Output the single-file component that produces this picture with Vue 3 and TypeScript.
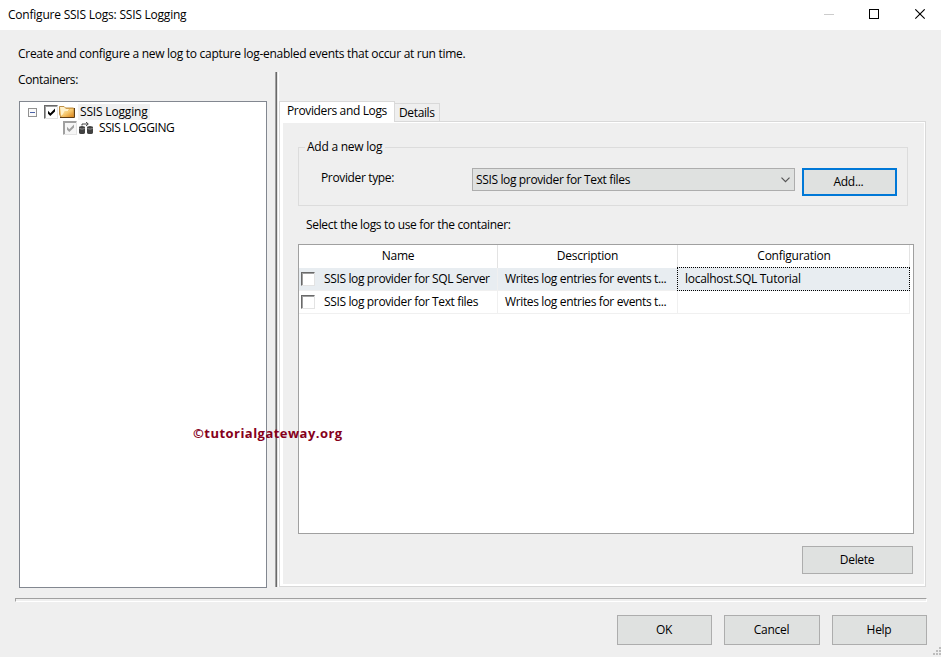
<script setup lang="ts">
import { ref } from 'vue'

interface LogRow {
  name: string
  description: string
  configuration: string
  checked: boolean
  selected: boolean
}

const providerType = 'SSIS log provider for Text files'
const activeTab = ref(0)
const tabs = ['Providers and Logs', 'Details']
const rows = ref<LogRow[]>([
  {
    name: 'SSIS log provider for SQL Server',
    description: 'Writes log entries for events t...',
    configuration: 'localhost.SQL Tutorial',
    checked: false,
    selected: true,
  },
  {
    name: 'SSIS log provider for Text files',
    description: 'Writes log entries for events t...',
    configuration: '',
    checked: false,
    selected: false,
  },
])
</script>

<template>
  <div class="window">
    <header class="titlebar">
      <span class="title">Configure SSIS Logs: SSIS Logging</span>
      <svg class="caption" width="102" height="11" viewBox="0 0 102 11" fill="none" shape-rendering="crispEdges">
        <path d="M0 5.5H10" stroke="#ccc" />
        <rect x="45.5" y="0.5" width="9" height="9" stroke="#000" />
        <path d="M91.3 0.3L100.7 9.7M100.7 0.3L91.3 9.7" stroke="#000" stroke-width="1.1" shape-rendering="auto" />
      </svg>
    </header>

    <p class="intro">Create and configure a new log to capture log-enabled events that occur at run time.</p>

    <main class="main">
      <section class="containers">
        <span class="containers-label">Containers:</span>
        <div class="tree">
          <div class="node root">
            <svg class="expander" width="9" height="9" viewBox="0 0 9 9" shape-rendering="crispEdges">
              <rect x="0.5" y="0.5" width="8" height="8" fill="#fafafa" stroke="#919191" />
              <path d="M2 4.5H7" stroke="#4b63a7" />
            </svg>
            <span class="check"><svg width="9" height="9" viewBox="0 0 9 9"><path d="M1 2.8L3.3 5.3L8 0.6V3.4L3.3 8L1 5.7Z" fill="#000" /></svg></span>
            <svg class="folder" width="16" height="14" viewBox="0 0 16 14">
              <defs>
                <linearGradient id="folderFill" x1="0" y1="0" x2="1" y2="1">
                  <stop offset="0" stop-color="#fff0bd" />
                  <stop offset="0.5" stop-color="#f5c66b" />
                  <stop offset="1" stop-color="#d98218" />
                </linearGradient>
              </defs>
              <path d="M0.5 1.5H5L6.5 3H14.5V12.5H2L0.5 9Z" fill="#e6ac4e" stroke="#bd8f45" />
              <path d="M1 2H5L7 4H10L9 6L2 11Z" fill="#fff1ca" />
              <path d="M2.5 12L5.5 6H9L11 4H14.5V12Z" fill="url(#folderFill)" />
              <path d="M1 12.5H15.5V3" fill="none" stroke="#5e3c13" />
            </svg>
            <span class="node-text active">SSIS Logging</span>
          </div>
          <div class="node child">
            <span class="check muted"><svg width="9" height="9" viewBox="0 0 9 9"><path d="M1 2.8L3.3 5.3L8 0.6V3.4L3.3 8L1 5.7Z" fill="#a0a0a0" /></svg></span>
            <svg class="package" width="15" height="13" viewBox="0 0 15 13">
              <path d="M0 5.5Q0 4 3 4T6 5.5V10.5Q6 12 3 12T0 10.5Z" fill="#414141" />
              <path d="M8 5.5Q8 4 11 4T14 5.5V10.5Q14 12 11 12T8 10.5Z" fill="#414141" />
              <path d="M0.5 6.5Q3 7.8 5.7 6.5M8.5 6.5Q11 7.8 13.7 6.5" fill="none" stroke="#aaa" stroke-width="0.8" />
              <path d="M3 3.5V2H9M7 0L9.3 2L7 4" fill="none" stroke="#444" />
            </svg>
            <span class="node-text">SSIS LOGGING</span>
          </div>
        </div>
      </section>

      <div class="splitter"></div>

      <section class="tabs">
        <nav class="tab-strip">
          <span
            v-for="(tab, i) in tabs"
            :key="tab"
            class="tab"
            :class="{ current: i === activeTab }"
            @click="activeTab = i"
          >{{ tab }}</span>
        </nav>
        <div class="panel">
          <div class="group">
            <span class="legend">Add a new log</span>
            <div class="provider-row">
              <span class="provider-label">Provider type:</span>
              <div class="select">
                <span>{{ providerType }}</span>
                <svg width="9" height="6" viewBox="0 0 9 6" fill="none"><path d="M0.5 0.7L4.5 4.7L8.5 0.7" stroke="#555" stroke-width="1.2" /></svg>
              </div>
              <button class="btn add">Add...</button>
            </div>
          </div>
          <span class="select-label">Select the logs to use for the container:</span>
          <div class="grid">
            <div class="row head">
              <span class="cell c-name">Name</span>
              <span class="cell c-desc">Description</span>
              <span class="cell c-conf">Configuration</span>
            </div>
            <div v-for="row in rows" :key="row.name" class="row" :class="{ selected: row.selected }">
              <span class="cell c-name"><i class="check empty" @click="row.checked = !row.checked"></i><span class="name-text">{{ row.name }}</span></span>
              <span class="cell c-desc">{{ row.description }}</span>
              <span class="cell c-conf">{{ row.configuration }}</span>
            </div>
          </div>
          <button class="btn delete">Delete</button>
        </div>
      </section>
    </main>

    <div class="rule"></div>

    <footer class="footer">
      <button class="btn">OK</button>
      <button class="btn wide">Cancel</button>
      <button class="btn">Help</button>
    </footer>

    <svg class="grip" width="8" height="8" viewBox="0 0 8 8" fill="#bdbdbd" shape-rendering="crispEdges">
      <path d="M6 0h2v2H6zM3 3h2v2H3zM6 3h2v2H6zM0 6h2v2H0zM3 6h2v2H3zM6 6h2v2H6z" />
    </svg>
    <span class="watermark">©tutorialgateway.org</span>
  </div>
</template>

<style>
body {
  background: #efefef;
  overflow: hidden;
}
</style>

<style scoped>
.window,
.window * {
  box-sizing: border-box;
}
.window {
  position: relative;
  display: flex;
  flex-direction: column;
  width: 941px;
  height: 657px;
  background: #efefef;
  color: #000;
  font: 12px/16px 'Open Sans', 'Noto Sans', sans-serif;
  letter-spacing: -0.36px;
  white-space: nowrap;
}
.titlebar {
  display: flex;
  justify-content: space-between;
  height: 30px;
  padding: 7px 15px 0 8px;
  background: #fff;
  letter-spacing: -0.22px;
}
.caption {
  margin-top: 2px;
}
.intro {
  margin: 16px 0 0 18px;
  letter-spacing: -0.285px;
}
.main {
  display: flex;
  height: 515px;
  margin-top: 10px;
}
.containers {
  width: 248px;
  margin-left: 19px;
}
.containers-label {
  display: block;
  height: 29px;
  margin-left: -1px;
}
.tree {
  height: 487px;
  padding-top: 2px;
  border: 1px solid #828790;
  background: #fff;
}
.node {
  display: flex;
  align-items: center;
  height: 16px;
}
.root {
  padding-left: 8px;
  letter-spacing: -0.17px;
}
.child {
  padding-left: 43px;
  letter-spacing: -0.42px;
}
.root .check {
  margin-left: 7px;
}
.folder {
  margin: 0 3px 0 1px;
}
.root .node-text {
  padding-left: 2px;
}
.package {
  margin: 0 4px 0 2px;
}
.node-text {
  height: 16px;
  padding: 0 2px 0 1px;
}
.active {
  background: #f0f0f0;
}
.check {
  display: flex;
  flex: none;
  align-items: center;
  justify-content: center;
  width: 14px;
  height: 14px;
  border: 1px solid #e3e3e3;
  border-top-color: #696969;
  border-left-color: #696969;
  background: #fff;
  box-shadow: inset 1px 1px #a0a0a0;
}
.muted {
  border-top-color: #a0a0a0;
  border-left-color: #a0a0a0;
  background: #f6f6f6;
}
.splitter {
  width: 4px;
  margin-left: 8px;
  border-right: 1px solid #fff;
  background: linear-gradient(to right, #a0a0a0 1px, #696969 1px 2px, #e3e3e3 2px);
}
.tabs {
  display: flex;
  flex-direction: column;
  width: 647px;
  padding-top: 29px;
}
.tab-strip {
  display: flex;
  align-items: flex-end;
  height: 20px;
}
.tab {
  width: 45px;
  height: 18px;
  padding: 1px 3px 0 4px;
  border: 1px solid #d9d9d9;
  border-width: 1px 1px 0 0;
}
.tab.current {
  position: relative;
  width: 116px;
  height: 21px;
  margin-bottom: -1px;
  padding: 1px 0 0 7px;
  border-left-width: 1px;
  background: #fff;
}
.panel {
  display: flex;
  flex-direction: column;
  height: 466px;
  padding: 25px 11px 0 15px;
  border: 1px solid #d9d9d9;
  box-shadow: inset 3px 1px #fff, inset -1px -2px #fff;
}
.group {
  width: 610px;
  height: 59px;
  margin-left: 3px;
  border: 1px solid #dcdcdc;
}
.legend {
  display: block;
  width: 80px;
  height: 16px;
  margin: -9px 0 0 6px;
  padding-left: 2px;
  background: #efefef;
  letter-spacing: -0.25px;
}
.provider-row {
  display: flex;
  align-items: flex-start;
  margin-top: 13px;
}
.provider-label {
  width: 151px;
  margin: 2px 0 0 22px;
}
.select {
  display: flex;
  align-items: center;
  justify-content: space-between;
  width: 323px;
  height: 23px;
  padding: 0 4px 0 3px;
  border: 1px solid #adadad;
  background: #dfe1e0;
}
.btn {
  width: 95px;
  height: 30px;
  padding: 0 1px 1px 0;
  border: 1px solid #adadad;
  background: #dfe1e0;
  color: #000;
  font: inherit;
  letter-spacing: -0.3px;
}
.btn.add {
  height: 28px;
  margin-left: 7px;
  padding: 0 2px 0 0;
  border: 2px solid #0078d7;
}
.btn.wide {
  width: 96px;
}
.btn.delete {
  align-self: flex-end;
  width: 111px;
  height: 28px;
  margin: 12px 1px 0 0;
}
.select-label {
  margin: 11px 0 11px 11px;
  letter-spacing: -0.33px;
}
.grid {
  width: 616px;
  height: 290px;
  margin-left: 3px;
  border: 1px solid #a0a0a0;
  background: #fff;
}
.row {
  display: flex;
  width: 611px;
  height: 23px;
}
.cell {
  display: flex;
  align-items: center;
  padding-left: 7px;
  border: 1px solid #f0f0f0;
  border-width: 0 1px 1px 0;
}
.c-name {
  width: 199px;
  padding-left: 2px;
}
.c-desc {
  width: 180px;
}
.c-conf {
  width: 232px;
  letter-spacing: -0.28px;
}
.name-text {
  margin-left: 9px;
}
.head .cell {
  justify-content: center;
  padding: 0 0 1px;
  border-color: #e3e3e3;
  border-bottom: 0;
  letter-spacing: -0.25px;
}
.head .c-conf {
  padding-left: 1px;
}
.selected .cell {
  background: #e8edf1;
}
.selected .c-conf {
  width: 233px;
  height: 24px;
  margin: -1px -1px 0;
  border: 1px dotted #000;
}
.rule {
  width: 912px;
  height: 4px;
  margin: 11px 0 0 15px;
  border: 1px solid #a0a0a0;
  border-right-color: #fff;
  border-bottom-color: #fff;
}
.footer {
  display: flex;
  gap: 12px;
  margin: 13px 0 0 617px;
}
.grip {
  position: absolute;
  right: 0;
  bottom: 2px;
}
.watermark {
  position: absolute;
  left: 193px;
  top: 425px;
  color: #85001b;
  font-size: 13px;
  font-weight: 700;
  letter-spacing: 0.47px;
}
</style>
